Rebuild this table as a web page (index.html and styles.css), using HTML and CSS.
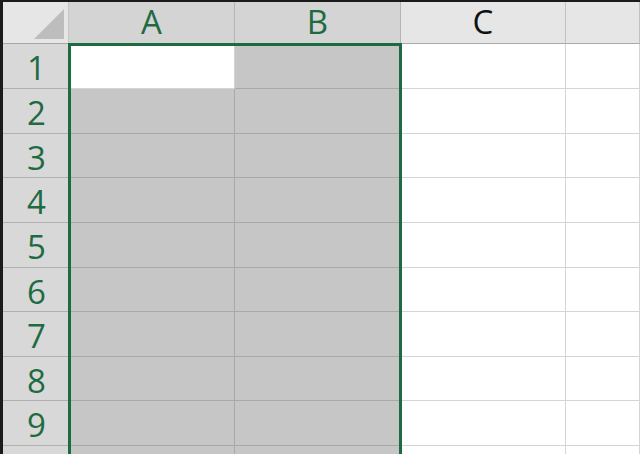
FILE: index.html
```html
<!DOCTYPE html>
<html lang="en">
<head>
    <meta charset="UTF-8">
    <title>Sheet</title>
    <link rel="stylesheet" href="styles.css">
</head>
<body>
    <div class="sheet">
        <!-- Header row -->
        <div class="corner"><span class="corner-tri"></span></div>
        <div class="col-head sel">A</div>
        <div class="col-head sel">B</div>
        <div class="col-head">C</div>
        <div class="col-head"></div>

        <!-- Rows -->
        <div class="row-head">1</div><div class="cell"></div><div class="cell gray"></div><div class="cell"></div><div class="cell"></div>
        <div class="row-head">2</div><div class="cell gray"></div><div class="cell gray"></div><div class="cell"></div><div class="cell"></div>
        <div class="row-head">3</div><div class="cell gray"></div><div class="cell gray"></div><div class="cell"></div><div class="cell"></div>
        <div class="row-head">4</div><div class="cell gray"></div><div class="cell gray"></div><div class="cell"></div><div class="cell"></div>
        <div class="row-head">5</div><div class="cell gray"></div><div class="cell gray"></div><div class="cell"></div><div class="cell"></div>
        <div class="row-head">6</div><div class="cell gray"></div><div class="cell gray"></div><div class="cell"></div><div class="cell"></div>
        <div class="row-head">7</div><div class="cell gray"></div><div class="cell gray"></div><div class="cell"></div><div class="cell"></div>
        <div class="row-head">8</div><div class="cell gray"></div><div class="cell gray"></div><div class="cell"></div><div class="cell"></div>
        <div class="row-head">9</div><div class="cell gray"></div><div class="cell gray"></div><div class="cell"></div><div class="cell"></div>
        <div class="row-head"></div><div class="cell gray"></div><div class="cell gray"></div><div class="cell"></div><div class="cell"></div>

        <!-- Selection outline over the A:B block -->
        <div class="selection"></div>
    </div>
</body>
</html>
```

FILE: styles.css
```css
body {
    margin: 0;
    padding: 2px 0 0 3px;
    background-color: #1b1b1b;
    font-family: "Open Sans", "Noto Sans", sans-serif;
    overflow: hidden;
    height: 454px;
    box-sizing: border-box;
}
.sheet {
    position: relative;
    display: grid;
    grid-template-columns: 66px 166px 166px 165px 1fr;
    grid-template-rows: 42px 45px 45px 44px 45px 45px 44px 45px 44px 45px 45px;
    background-color: #ffffff;
}
.corner {
    position: relative;
    background-color: #e6e6e6;
    border-right: 1px solid #c4c4c4;
    border-bottom: 1px solid #a8a8a8;
}
.corner-tri {
    position: absolute;
    right: 4px;
    bottom: 4px;
    width: 0;
    height: 0;
    border-left: 30px solid transparent;
    border-bottom: 30px solid #bdbdbd;
}
.col-head {
    display: flex;
    align-items: center;
    justify-content: center;
    background-color: #e6e6e6;
    border-right: 1px solid #c2c2c2;
    border-bottom: 1px solid #a9a9a9;
    font-size: 33px;
    color: #111111;
    line-height: 1;
    padding-bottom: 2px;
}
.col-head.sel {
    background-color: #d4d4d4;
    color: #1e6b41;
    border-right-color: #b4b4b4;
}
.row-head {
    display: flex;
    align-items: center;
    justify-content: center;
    background-color: #d8d8d8;
    border-right: 1px solid #c0c0c0;
    border-bottom: 1px solid #b0b0b0;
    font-size: 33px;
    color: #1e6b41;
    line-height: 1;
    padding-left: 2px;
    padding-top: 3px;
}
.cell {
    border-right: 1px solid #d4d4d4;
    border-bottom: 1px solid #d4d4d4;
}
.cell.gray {
    background-color: #c6c6c6;
    border-right-color: #a9a9a9;
    border-bottom-color: #a9a9a9;
}
.selection {
    position: absolute;
    left: 65px;
    top: 41px;
    width: 334px;
    height: 480px;
    border: 3px solid #1d6b40;
    box-sizing: border-box;
    pointer-events: none;
}
```
